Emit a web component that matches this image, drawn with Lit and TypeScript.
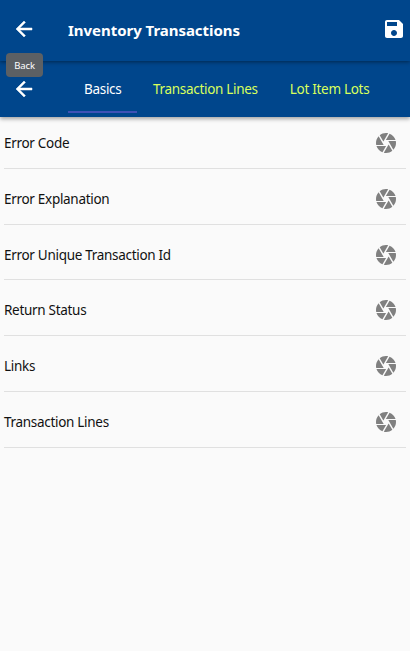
import { LitElement, html, css } from "lit";
import { customElement } from "lit/decorators.js";

const ARROW = "M20 11H7.83l5.59-5.59L12 4l-8 8 8 8 1.41-1.41L7.83 13H20v-2z";
const SAVE =
  "M17 3H5c-1.11 0-2 .9-2 2v14c0 1.1.89 2 2 2h14c1.1 0 2-.9 2-2V7l-4-4zm-5 16c-1.66 0-3-1.34-3-3s1.34-3 3-3 3 1.34 3 3-1.34 3-3 3zm3-10H5V5h10v4z";
const CAMERA =
  "M9.4 10.5l4.77-8.26C13.47 2.09 12.75 2 12 2c-2.4 0-4.6.85-6.32 2.25l3.66 6.35.06-.1zM21.54 9c-.92-2.92-3.15-5.26-6-6.34L11.88 9h9.66zm.26 1h-7.49l.29.5 4.76 8.25C21 16.97 22 14.61 22 12c0-.69-.07-1.35-.2-2zM8.54 12l-3.9-6.75C3.01 7.03 2 9.39 2 12c0 .69.07 1.35.2 2h7.49l-1.15-2zm-6.08 3c.92 2.92 3.15 5.26 6 6.34L12.12 15H2.46zm11.27 0l-3.9 6.76c.7.15 1.42.24 2.17.24 2.4 0 4.6-.85 6.32-2.25l-3.66-6.35-.93 1.6z";

const icon = (d: string, cls = "") =>
  html`<svg class="icon ${cls}" viewBox="0 0 24 24" aria-hidden="true"><path d=${d}></path></svg>`;

@customElement("app-root")
export class AppRoot extends LitElement {
  static styles = css`
    :host {
      display: block;
      height: 651px;
      overflow: hidden;
      background: #fafafa;
      color: #111;
      font-family: "Noto Sans", "Open Sans", sans-serif;
      font-size: 13.5px;
      letter-spacing: -0.3px;
    }
    .icon {
      width: 24px;
      height: 24px;
      flex: none;
      fill: currentColor;
      display: block;
    }
    .arrow {
      stroke: currentColor;
      stroke-width: 0.5px;
    }
    .head {
      background: #00468c;
      color: #fff;
      height: 117px;
      box-shadow: 0 2px 4px rgba(0, 0, 0, 0.35);
    }
    .bar {
      box-sizing: border-box;
      display: flex;
      align-items: center;
      height: 61px;
      padding: 0 4px 3px 12px;
      box-shadow: 0 1px 4px rgba(0, 0, 0, 0.45);
    }
    .back {
      position: relative;
    }
    .tip {
      position: absolute;
      left: -6px;
      top: 36px;
      width: 37px;
      height: 24px;
      border-radius: 4px;
      background: #5c6064;
      font-size: 9.5px;
      letter-spacing: -0.1px;
      line-height: 26px;
      text-align: center;
    }
    .title {
      flex: 1;
      margin: 2px 0 0 32px;
      font-size: 15px;
      font-weight: 700;
      letter-spacing: -0.04px;
      white-space: nowrap;
    }
    .nav {
      display: flex;
      height: 56px;
      padding-left: 12px;
    }
    .nav > .icon {
      margin: 16px 32px 0 0;
    }
    .tab {
      box-sizing: border-box;
      height: 52px;
      padding: 0 16px;
      line-height: 56px;
      white-space: nowrap;
      color: #d8ff5c;
    }
    .tab.active {
      padding-right: 15.5px;
      color: #fff;
      border-bottom: 2px solid #3f51b5;
    }
    .list {
      padding: 0 4px;
    }
    .row {
      box-sizing: border-box;
      display: flex;
      align-items: center;
      justify-content: space-between;
      height: 55.75px;
      padding: 5px 8px 0 0;
      border-bottom: 1px solid #e0e0e0;
    }
    .row:first-child {
      height: 51.9px;
      padding-top: 1px;
    }
    .aperture {
      color: #808080;
    }
  `;

  private tabs = ["Basics", "Transaction Lines", "Lot Item Lots"];
  private rows = [
    "Error Code",
    "Error Explanation",
    "Error Unique Transaction Id",
    "Return Status",
    "Links",
    "Transaction Lines",
  ];

  render() {
    return html`
      <header class="head">
        <div class="bar">
          <div class="back">${icon(ARROW, "arrow")}<div class="tip">Back</div></div>
          <div class="title">Inventory Transactions</div>
          ${icon(SAVE)}
        </div>
        <nav class="nav">
          ${icon(ARROW, "arrow")}
          ${this.tabs.map((t, i) => html`<div class="tab ${i === 0 ? "active" : ""}">${t}</div>`)}
        </nav>
      </header>
      <main class="list">
        ${this.rows.map((r) => html`<div class="row"><span>${r}</span>${icon(CAMERA, "aperture")}</div>`)}
      </main>
    `;
  }
}
